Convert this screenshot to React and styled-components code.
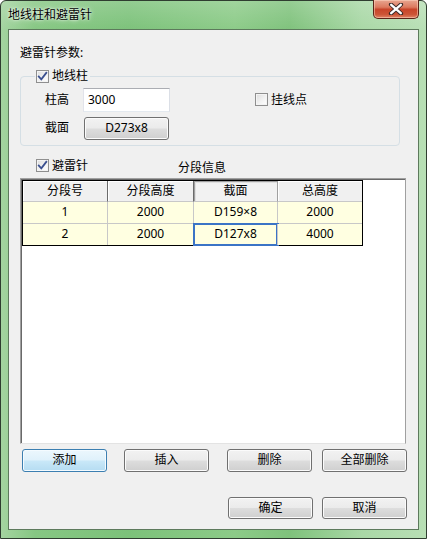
import React from "react";
import styled, { createGlobalStyle } from "styled-components";

const Global = createGlobalStyle`
  html, body { margin: 0; padding: 0; }
  body {
    width: 427px; height: 539px; overflow: hidden; background: #fff;
    font-family: "Noto Sans", "Noto Sans CJK SC", sans-serif;
    font-size: 12px; color: #000;
  }
  * { box-sizing: border-box; }
`;

const Window = styled.div`
  width: 427px;
  height: 539px;
  border: 1px solid #2f3d30;
  border-radius: 6px 6px 0 0;
  background:
    linear-gradient(180deg, rgba(255,255,255,0.18) 0%, rgba(255,255,255,0) 30px),
    linear-gradient(90deg, #a4d4a0 0%, #86c783 8%, #7cc27a 30%, #8ccb88 55%, #7fc27c 68%, #a9d8a6 85%, #b8dfb5 100%);
  display: flex;
  flex-direction: column;
  padding: 0 7px 8px 7px;
`;

const TitleBar = styled.div`
  height: 28px;
  display: flex;
  justify-content: space-between;
  align-items: flex-start;
`;

const Title = styled.div`
  padding-top: 6px;
  line-height: 16px;
  font-size: 12px;
  text-shadow: 0 0 5px rgba(255,255,255,0.9), 0 0 2px rgba(255,255,255,0.9);
`;

const CloseButton = styled.div`
  width: 46px;
  height: 19px;
  margin-top: -1px;
  border: 1px solid #5a2418;
  border-top: none;
  border-radius: 0 0 5px 5px;
  background: linear-gradient(180deg, #e8a690 0%, #dc7a5f 40%, #c8452a 52%, #cc5536 80%, #e08466 100%);
  box-shadow: inset 0 0 0 1px rgba(255,220,200,0.5);
  display: flex;
  align-items: center;
  justify-content: center;
`;

const Client = styled.div`
  flex: 1;
  border: 1px solid #5d7a5c;
  background: #f0f0f0;
  display: flex;
  flex-direction: column;
  padding: 15px 11px 0 11px;
`;

const SectionLabel = styled.div`
  line-height: 16px;
  height: 16px;
`;

const Group = styled.fieldset`
  margin: 7px 0 0 0;
  width: 380px;
  border: 1px solid #d5dfe5;
  border-radius: 4px;
  padding: 2px 0 5px 0;
  min-width: 0;
`;

const Legend = styled.legend`
  margin-left: 14px;
  padding: 0 2px 0 1px;
  line-height: 16px;
`;

const GroupBody = styled.div`
  padding-left: 24px;
`;

const CheckLabel = styled.span`
  display: inline-flex;
  align-items: center;
  gap: 3px;
  line-height: 16px;
  white-space: nowrap;
  margin-left: ${(p) => p.$ml || 0}px;
`;

const Box = styled.span`
  width: 13px;
  height: 13px;
  border: 1px solid #8f8f8f;
  background: linear-gradient(135deg, #dcdcdc 0%, #f4f4f4 60%, #ffffff 100%);
  box-shadow: inset 0 0 0 1px #f4f4f4;
  display: inline-flex;
  align-items: center;
  justify-content: center;
  flex: none;
`;

const FieldRow = styled.div`
  display: flex;
  align-items: center;
  height: ${(p) => p.$h}px;
  margin-top: ${(p) => p.$mt || 0}px;
`;

const FieldLabel = styled.span`
  width: ${(p) => p.$w}px;
  line-height: 16px;
  flex: none;
`;

const TextBox = styled.div`
  width: 87px;
  height: 24px;
  border: 1px solid #abadb3;
  border-left-color: #e2e3ea;
  border-right-color: #dbdfe6;
  border-bottom-color: #e3e9ef;
  background: #fff;
  padding-left: 4px;
  line-height: 20px;
  display: flex;
  align-items: center;
`;

const Button = styled.div`
  width: 85px;
  height: ${(p) => p.$h || 23}px;
  margin-left: ${(p) => p.$ml || 0}px;
  border: 1px solid ${(p) => (p.$default ? "#3c7fb1" : "#707070")};
  border-radius: 3px;
  background: ${(p) =>
    p.$default
      ? "linear-gradient(180deg, #ecf7fd 0%, #dff1fb 48%, #c9e8f8 52%, #b5dcf2 100%)"
      : "linear-gradient(180deg, #f2f2f2 0%, #ebebeb 48%, #dddddd 52%, #cfcfcf 100%)"};
  box-shadow: inset 0 0 0 1px ${(p) => (p.$default ? "#f4fbff" : "#fbfbfb")};
  display: flex;
  align-items: center;
  justify-content: center;
  line-height: 16px;
  flex: none;
`;

const CheckRow = styled.div`
  display: flex;
  align-items: center;
  height: 16px;
  margin-top: 13px;
  padding-left: 16px;
`;

const CheckSlot = styled.div`
  width: 142px;
  flex: none;
`;

const Frame = styled.div`
  margin-top: 3px;
  width: 386px;
  height: 266px;
  background: #fff;
  border-top: 1px solid #a0a0a0;
  border-left: 1px solid #a0a0a0;
  border-right: 1px solid #a0a0a0;
  border-bottom: 1px solid #e3e3e3;
  box-shadow: inset 1px 1px 0 #696969;
  padding: 1px 0 0 1px;
`;

const Grid = styled.div`
  display: grid;
  grid-template-columns: 85px 86px 84px 84px;
  width: max-content;
  border: 1px solid #000;
`;

const HeadCell = styled.div`
  height: 21px;
  background: ${(p) => (p.$sel ? "#f2f2f2" : "#f0f0f0")};
  border-right: ${(p) => (p.$last ? "none" : p.$sel ? "1px solid #a0a0a0" : "1px solid #6b6b6b")};
  border-bottom: 1px solid #c8c8c8;
  box-shadow: ${(p) => (p.$sel ? "inset 1px 1px 0 #a0a0a0, inset 2px 2px 0 #e0e0e0" : "inset 1px 1px 0 #ffffff")};
  display: flex;
  align-items: center;
  justify-content: center;
  line-height: 16px;
`;

const Cell = styled.div`
  height: ${(p) => (p.$lastRow ? 21 : 22)}px;
  background: #ffffe1;
  border-right: ${(p) => (p.$last ? "none" : "1px solid #c8c8c8")};
  border-bottom: ${(p) => (p.$lastRow ? "none" : "1px solid #c8c8c8")};
  box-shadow: ${(p) => (p.$focus ? "0 0 0 1px #3b74c6, inset 0 0 0 1px #3b74c6" : "none")};
  position: relative;
  display: flex;
  align-items: center;
  justify-content: center;
  line-height: 16px;
`;

const ButtonRow = styled.div`
  display: flex;
  justify-content: ${(p) => (p.$end ? "flex-end" : "flex-start")};
  margin-top: ${(p) => p.$mt}px;
  padding-left: ${(p) => (p.$end ? 0 : 2)}px;
`;

function Check({ checked }) {
  return (
    <Box>
      {checked && (
        <svg width="11" height="11" viewBox="0 0 11 11">
          <path d="M1.8 5.6 L4.3 8.3 L9.3 1.8" fill="none" stroke="#3a4f8f" strokeWidth="1.8" strokeLinecap="square" />
        </svg>
      )}
    </Box>
  );
}

const headers = ["分段号", "分段高度", "截面", "总高度"];
const rows = [
  ["1", "2000", "D159×8", "2000"],
  ["2", "2000", "D127x8", "4000"],
];

export default function App() {
  return (
    <>
      <Global />
      <Window>
        <TitleBar>
          <Title>地线柱和避雷针</Title>
          <CloseButton>
            <svg width="16" height="12" viewBox="0 0 16 12">
              <path d="M3 1.5 L13 10.5 M13 1.5 L3 10.5" stroke="#3a2a28" strokeWidth="4.2" strokeLinecap="round" />
              <path d="M3.2 1.8 L12.8 10.2 M12.8 1.8 L3.2 10.2" stroke="#ffffff" strokeWidth="2.4" strokeLinecap="round" />
            </svg>
          </CloseButton>
        </TitleBar>
        <Client>
          <SectionLabel>避雷针参数:</SectionLabel>
          <Group>
            <Legend>
              <CheckLabel>
                <Check checked />
                地线柱
              </CheckLabel>
            </Legend>
            <GroupBody>
              <FieldRow $h={24}>
                <FieldLabel $w={38}>柱高</FieldLabel>
                <TextBox>3000</TextBox>
                <CheckLabel $ml={85}>
                  <Check />
                  挂线点
                </CheckLabel>
              </FieldRow>
              <FieldRow $h={23} $mt={5}>
                <FieldLabel $w={39}>截面</FieldLabel>
                <Button>D273x8</Button>
              </FieldRow>
            </GroupBody>
          </Group>
          <CheckRow>
            <CheckSlot>
              <CheckLabel>
                <Check checked />
                避雷针
              </CheckLabel>
            </CheckSlot>
            <span>分段信息</span>
          </CheckRow>
          <Frame>
            <Grid>
              {headers.map((h, i) => (
                <HeadCell key={h} $sel={i === 2} $last={i === 3}>
                  {h}
                </HeadCell>
              ))}
              {rows.map((r, ri) =>
                r.map((c, ci) => (
                  <Cell
                    key={ri + "-" + ci}
                    $last={ci === 3}
                    $lastRow={ri === rows.length - 1}
                    $focus={ri === 1 && ci === 2}
                  >
                    {c}
                  </Cell>
                ))
              )}
            </Grid>
          </Frame>
          <ButtonRow $mt={5}>
            <Button $default>添加</Button>
            <Button $ml={17}>插入</Button>
            <Button $ml={18}>删除</Button>
            <Button $ml={10}>全部删除</Button>
          </ButtonRow>
          <ButtonRow $mt={25} $end>
            <Button $h={22}>确定</Button>
            <Button $h={22} $ml={9}>取消</Button>
          </ButtonRow>
        </Client>
      </Window>
    </>
  );
}
